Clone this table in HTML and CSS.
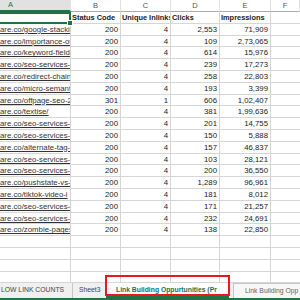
FILE: index.html
```html
<!DOCTYPE html>
<html>
<head>
<meta charset="utf-8">
<link rel="stylesheet" href="styles.css">
</head>
<body>
<div class="app">
  <div class="sheet">
    <div class="row colhead">
      <div class="c a hsel">A</div><div class="c b">B</div><div class="c cc">C</div><div class="c d">D</div><div class="c e">E</div><div class="c f">F</div>
    </div>
    <div class="row">
      <div class="c a active"><span class="handle"></span></div>
      <div class="c b th">Status Code</div>
      <div class="c cc th">Unique Inlinks</div>
      <div class="c d th">Clicks</div>
      <div class="c e th">Impressions</div>
      <div class="c f"></div>
    </div>
    <div class="row"><div class="c a url">are.co/google-stacking-</div><div class="c b n">200</div><div class="c cc n">4</div><div class="c d n">2,553</div><div class="c e n">71,909</div><div class="c f"></div></div>
    <div class="row"><div class="c a url">are.co/importance-of-</div><div class="c b n">200</div><div class="c cc n">4</div><div class="c d n">109</div><div class="c e n">2,73,065</div><div class="c f"></div></div>
    <div class="row"><div class="c a url">are.co/keyword-field-</div><div class="c b n">200</div><div class="c cc n">4</div><div class="c d n">614</div><div class="c e n">15,976</div><div class="c f"></div></div>
    <div class="row"><div class="c a url">are.co/seo-services-p</div><div class="c b n">200</div><div class="c cc n">4</div><div class="c d n">239</div><div class="c e n">17,273</div><div class="c f"></div></div>
    <div class="row"><div class="c a url">are.co/redirect-chains</div><div class="c b n">200</div><div class="c cc n">4</div><div class="c d n">258</div><div class="c e n">22,803</div><div class="c f"></div></div>
    <div class="row"><div class="c a url">are.co/micro-semantic</div><div class="c b n">200</div><div class="c cc n">4</div><div class="c d n">193</div><div class="c e n">3,399</div><div class="c f"></div></div>
    <div class="row"><div class="c a url">are.co/offpage-seo-2</div><div class="c b n">301</div><div class="c cc n">1</div><div class="c d n">606</div><div class="c e n">1,02,407</div><div class="c f"></div></div>
    <div class="row"><div class="c a url">are.co/textise/</div><div class="c b n">200</div><div class="c cc n">4</div><div class="c d n">381</div><div class="c e n">1,99,636</div><div class="c f"></div></div>
    <div class="row"><div class="c a url">are.co/seo-services-l</div><div class="c b n">200</div><div class="c cc n">4</div><div class="c d n">201</div><div class="c e n">14,755</div><div class="c f"></div></div>
    <div class="row"><div class="c a url">are.co/seo-services-i</div><div class="c b n">200</div><div class="c cc n">4</div><div class="c d n">150</div><div class="c e n">5,888</div><div class="c f"></div></div>
    <div class="row"><div class="c a url">are.co/alternate-tag-</div><div class="c b n">200</div><div class="c cc n">4</div><div class="c d n">157</div><div class="c e n">46,837</div><div class="c f"></div></div>
    <div class="row"><div class="c a url">are.co/seo-services-l</div><div class="c b n">200</div><div class="c cc n">4</div><div class="c d n">103</div><div class="c e n">28,121</div><div class="c f"></div></div>
    <div class="row"><div class="c a url">are.co/seo-services-s</div><div class="c b n">200</div><div class="c cc n">4</div><div class="c d n">200</div><div class="c e n">36,550</div><div class="c f"></div></div>
    <div class="row"><div class="c a url">are.co/pushstate-vs-</div><div class="c b n">200</div><div class="c cc n">4</div><div class="c d n">1,289</div><div class="c e n">96,961</div><div class="c f"></div></div>
    <div class="row"><div class="c a url">are.co/tiktok-video-i</div><div class="c b n">200</div><div class="c cc n">4</div><div class="c d n">181</div><div class="c e n">8,012</div><div class="c f"></div></div>
    <div class="row"><div class="c a url">are.co/seo-services-c</div><div class="c b n">200</div><div class="c cc n">4</div><div class="c d n">171</div><div class="c e n">21,257</div><div class="c f"></div></div>
    <div class="row"><div class="c a url">are.co/seo-services-s</div><div class="c b n">200</div><div class="c cc n">4</div><div class="c d n">232</div><div class="c e n">24,691</div><div class="c f"></div></div>
    <div class="row"><div class="c a url">are.co/zombie-pages</div><div class="c b n">200</div><div class="c cc n">4</div><div class="c d n">138</div><div class="c e n">22,850</div><div class="c f"></div></div>
    <div class="row"><div class="c a"></div><div class="c b"></div><div class="c cc"></div><div class="c d"></div><div class="c e"></div><div class="c f"></div></div>
    <div class="row"><div class="c a"></div><div class="c b"></div><div class="c cc"></div><div class="c d"></div><div class="c e"></div><div class="c f"></div></div>
    <div class="row"><div class="c a"></div><div class="c b"></div><div class="c cc"></div><div class="c d"></div><div class="c e"></div><div class="c f"></div></div>
    <div class="row"><div class="c a"></div><div class="c b"></div><div class="c cc"></div><div class="c d"></div><div class="c e"></div><div class="c f"></div></div>
  </div>
  <div class="tabs">
    <div class="tab t1">LOW LINK COUNTS</div>
    <div class="tab t2">Sheet3</div>
    <div class="tab t3 on">Link Building Oppurtunities (Pr</div>
    <div class="tab t4">Link Building Opp</div>
  </div>
  <div class="status"></div>
</div>
</body>
</html>
```
FILE: styles.css
```css
html, body {
  margin: 0;
  padding: 0;
  background: #ffffff;
}
.app {
  width: 300px;
  height: 300px;
  overflow: hidden;
  display: flex;
  flex-direction: column;
  font-family: "Liberation Sans", Arial, sans-serif;
  color: #222222;
}
.sheet {
  height: 283px;
  overflow: hidden;
  flex: none;
}
.row {
  display: flex;
  height: 11.8px;
}
.c {
  box-sizing: border-box;
  flex: none;
  height: 100%;
  border-right: 1px solid #d6d6d6;
  border-bottom: 1px solid #d6d6d6;
  font-size: 7.8px;
  line-height: 11px;
  white-space: nowrap;
  overflow: hidden;
  padding: 0 2px;
}
.a { width: 71px; }
.b { width: 50px; }
.cc { width: 50px; }
.d { width: 49px; }
.e { width: 51px; }
.f { width: 29px; border-right: none; }

.colhead { height: 12px; }
.colhead .c {
  text-align: center;
  color: #555555;
  font-size: 7.5px;
  line-height: 11px;
  border-bottom: 1px solid #ababab;
  border-right: 1px solid #e2e2e2;
}
.colhead .hsel {
  background: #e1e1e1;
  color: #217346;
  border-bottom: 2px solid #217346;
  line-height: 10px;
  text-align: left;
  padding-left: 8px;
}
.th {
  font-weight: bold;
  font-size: 7.4px;
  padding-left: 1px;
}
.n { text-align: right; }
.url {
  padding-left: 0;
  text-decoration: underline;
  color: #333333;
}
.active {
  position: relative;
  border: 2px solid #217346;
  border-left: none;
  overflow: visible;
}
.handle {
  position: absolute;
  right: -4px;
  bottom: -4px;
  width: 4px;
  height: 4px;
  background: #217346;
  border: 1px solid #ffffff;
  z-index: 2;
}
.tabs {
  height: 15px;
  flex: none;
  background: #f0f0f0;
  display: flex;
  align-items: stretch;
  font-size: 6.8px;
  color: #444444;
}
.tab {
  box-sizing: border-box;
  white-space: nowrap;
  overflow: hidden;
  line-height: 14px;
  flex: none;
}
.t1 { width: 73px; padding-left: 1px; border-right: 1px solid #c6c6c6; }
.t2 { width: 33px; padding-left: 6px; }
.t3 {
  width: 123px;
  position: relative;
  overflow: visible;
  background: #ffffff;
  color: #217346;
  font-weight: bold;
  padding-left: 10px;
  border-bottom: 2px solid #217346;
}
.t3::after {
  content: "";
  position: absolute;
  left: -1px;
  right: -1px;
  top: -8px;
  bottom: 0px;
  border: 2px solid #e8191f;
}
.t4 {
  margin-left: 4px;
  width: 72px;
  padding-left: 11px;
  background: #f7f7f7;
  border: 1px solid #c6c6c6;
  border-bottom: none;
  color: #666666;
}
.status {
  flex: 1;
  background: #217346;
}
```
